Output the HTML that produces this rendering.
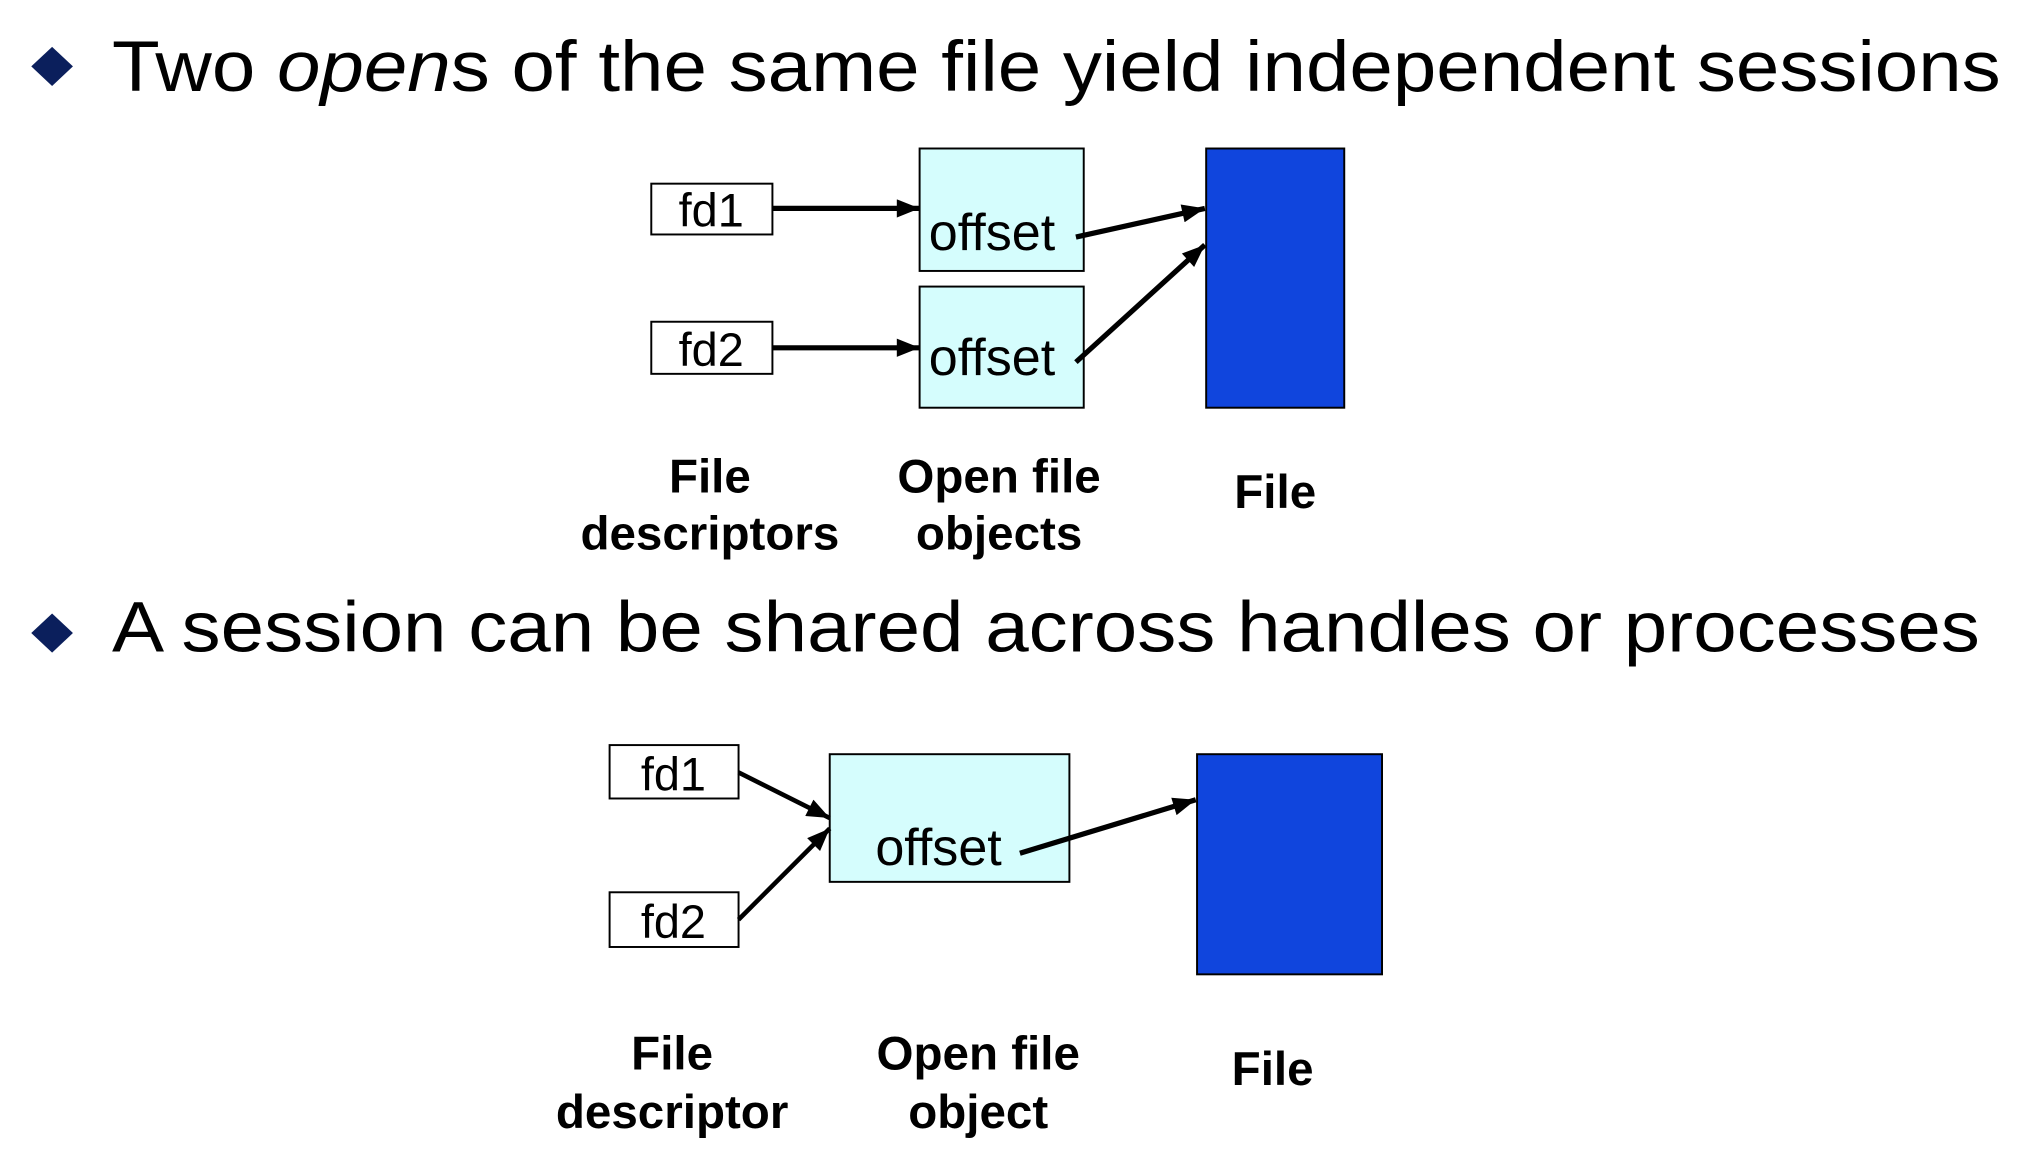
<!DOCTYPE html>
<html><head><meta charset="utf-8"><style>
html,body{margin:0;padding:0;background:#fff;width:2032px;height:1164px;overflow:hidden}
svg{display:block}
text{font-family:"Liberation Sans",Arial,sans-serif;fill:#000}
</style></head><body>
<svg width="2032" height="1164" viewBox="0 0 1560 893.6" preserveAspectRatio="none" xmlns="http://www.w3.org/2000/svg">
<defs>
<marker id="ah2" viewBox="0 0 10 8" markerWidth="18" markerHeight="14" refX="10" refY="4" orient="auto" markerUnits="userSpaceOnUse">
<path d="M0,0 L10,4 L0,8 z" fill="#000"/>
</marker>
</defs>
<path d="M40,36 L56,51 L40,66 L24,51 z" fill="#0b1f5c"/>
<text x="86" y="70" font-size="55" textLength="1450" lengthAdjust="spacingAndGlyphs">Two <tspan font-style="italic">open</tspan>s of the same file yield independent sessions</text>

<rect x="500" y="141" width="93" height="39" fill="#fff" stroke="#000" stroke-width="1.5"/>
<text x="546" y="174" font-size="36" text-anchor="middle">fd1</text>
<rect x="500" y="247" width="93" height="40" fill="#fff" stroke="#000" stroke-width="1.5"/>
<text x="546" y="281" font-size="36" text-anchor="middle">fd2</text>
<rect x="706" y="114" width="126" height="94" fill="#d5fdfd" stroke="#000" stroke-width="1.5"/>
<text x="713" y="192" font-size="40">offset</text>
<rect x="706" y="220" width="126" height="93" fill="#d5fdfd" stroke="#000" stroke-width="1.5"/>
<text x="713" y="288" font-size="40">offset</text>
<rect x="926" y="114" width="106" height="199" fill="#1045dd" stroke="#000" stroke-width="1.5"/>
<line x1="593" y1="160" x2="706" y2="160" stroke="#000" stroke-width="4" marker-end="url(#ah2)"/>
<line x1="593" y1="267" x2="706" y2="267" stroke="#000" stroke-width="4" marker-end="url(#ah2)"/>
<line x1="826" y1="182" x2="925" y2="160" stroke="#000" stroke-width="4" marker-end="url(#ah2)"/>
<line x1="826" y1="278" x2="925" y2="188" stroke="#000" stroke-width="4" marker-end="url(#ah2)"/>
<g font-size="36.5" font-weight="bold" text-anchor="middle">
<text x="545" y="378">File</text><text x="545" y="422">descriptors</text>
<text x="767" y="378">Open file</text><text x="767" y="422">objects</text>
<text x="979" y="390">File</text>
</g>

<path d="M40,471 L56,486 L40,501 L24,486 z" fill="#0b1f5c"/>
<text x="86" y="500" font-size="55" textLength="1434" lengthAdjust="spacingAndGlyphs">A session can be shared across handles or processes</text>

<rect x="468" y="572" width="99" height="41" fill="#fff" stroke="#000" stroke-width="1.5"/>
<text x="517" y="607" font-size="36" text-anchor="middle">fd1</text>
<rect x="468" y="685" width="99" height="42" fill="#fff" stroke="#000" stroke-width="1.5"/>
<text x="517" y="720" font-size="36" text-anchor="middle">fd2</text>
<rect x="637" y="579" width="184" height="98" fill="#d5fdfd" stroke="#000" stroke-width="1.5"/>
<text x="672" y="664" font-size="40">offset</text>
<rect x="919" y="579" width="142" height="169" fill="#1045dd" stroke="#000" stroke-width="1.5"/>
<line x1="567" y1="593" x2="637" y2="628" stroke="#000" stroke-width="3.5" marker-end="url(#ah2)"/>
<line x1="567" y1="706" x2="637" y2="636" stroke="#000" stroke-width="3.5" marker-end="url(#ah2)"/>
<line x1="783" y1="655" x2="918" y2="614" stroke="#000" stroke-width="4" marker-end="url(#ah2)"/>
<g font-size="36.5" font-weight="bold" text-anchor="middle">
<text x="516" y="821">File</text><text x="516" y="866">descriptor</text>
<text x="751" y="821">Open file</text><text x="751" y="866">object</text>
<text x="977" y="833">File</text>
</g>
</svg>
</body></html>
